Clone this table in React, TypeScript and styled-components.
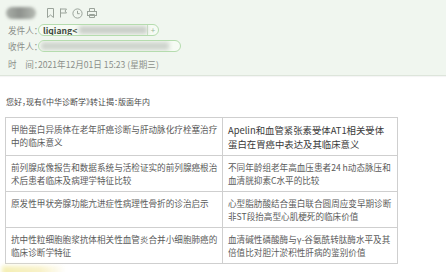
import React from 'react'
import styled, { createGlobalStyle } from 'styled-components'

const GlobalStyle = createGlobalStyle`
  html, body {
    margin: 0;
    padding: 0;
    background: #fff;
  }
  body {
    font-family: "Noto Sans CJK SC", "Noto Sans", sans-serif;
    width: 446px;
    height: 272px;
    overflow: hidden;
  }
`

const Page = styled.div`
  width: 446px;
  height: 272px;
  position: relative;
  overflow: hidden;
`

const Header = styled.div`
  background: #f0f6ef;
  height: 76px;
  box-sizing: border-box;
  padding: 6px 8px 0;
  border-bottom: 1px solid #dde5db;
  box-shadow: 0 1px 1px rgba(0, 0, 0, 0.04);
`

const TopBar = styled.div`
  display: flex;
  align-items: center;
  height: 14px;
  margin-left: -2px;
`

const BlurredName = styled.div`
  width: 30px;
  height: 12px;
  border-radius: 6px;
  background: linear-gradient(90deg, #a9aea8 0%, #8e928d 45%, #b5bab3 100%);
  filter: blur(1.5px);
  margin-right: 10px;
`

const Icons = styled.div`
  display: flex;
  align-items: center;
  gap: 4px;
  color: #9aa39a;

  svg {
    display: block;
  }
`

const FieldRow = styled.div<{ gap?: number }>`
  display: flex;
  align-items: center;
  height: 12px;
  margin-top: ${p => p.gap ?? 4}px;
  font-size: 8.6px;
  color: #8b8f8a;
  font-feature-settings: 'halt';
`

const Label = styled.span`
  width: 30px;
  flex-shrink: 0;
  white-space: nowrap;
`

const Pill = styled.div<{ w: number }>`
  display: flex;
  align-items: center;
  width: ${p => p.w}px;
  height: 12px;
  box-sizing: border-box;
  border: 1px solid #b5dcae;
  border-radius: 7px;
  background: #f6fbf4;
  overflow: hidden;
`

const PillName = styled.span`
  font-size: 8.6px;
  font-weight: 700;
  color: #3f4a3f;
  padding-left: 4px;
  white-space: nowrap;
`

const Smudge = styled.div<{ w: number; tone?: string }>`
  width: ${p => p.w}px;
  height: 8px;
  background: ${p => p.tone ?? '#c9cec8'};
  filter: blur(2px);
  margin-left: 2px;
`

const PlusBox = styled.div`
  margin-left: auto;
  width: 11px;
  height: 100%;
  border-left: 1px solid #c7dfc2;
  display: flex;
  align-items: center;
  justify-content: center;
  font-size: 8px;
  color: #9bb699;
  line-height: 1;
`

const TimeText = styled.span`
  white-space: nowrap;
`

const Body = styled.div`
  padding: 0 5px;
`

const Greeting = styled.p`
  margin: 20px 0 0 1px;
  height: 12px;
  line-height: 12px;
  font-size: 8px;
  color: #4a4a4a;
  font-feature-settings: 'halt';
  white-space: nowrap;
`

const Table = styled.table`
  margin-top: 9px;
  border-collapse: collapse;
  width: 392px;
  table-layout: fixed;
`

const Cell = styled.td<{ big?: boolean }>`
  border: 1px solid #cfcfcf;
  padding: 5px 5px 4px;
  vertical-align: top;
  font-size: ${p => (p.big ? 9.4 : 8.6)}px;
  line-height: ${p => (p.big ? 14 : 13)}px;
  color: ${p => (p.big ? '#3a3a3a' : '#5a5a5a')};
  white-space: nowrap;
  overflow: hidden;
`

const Signature = styled.div`
  position: absolute;
  left: 2px;
  top: 266px;
  width: 64px;
  height: 14px;
  background: linear-gradient(90deg, #f4efb4, #f8f1c8 60%, rgba(255, 255, 255, 0));
  filter: blur(2px);
`

const BookmarkIcon = () => (
  <svg width="9" height="10" viewBox="0 0 9 10" fill="none" stroke="currentColor" strokeWidth="1">
    <path d="M1.5 0.5h6v9l-3-2.5-3 2.5z" />
  </svg>
)

const FlagIcon = () => (
  <svg width="9" height="10" viewBox="0 0 9 10" fill="none" stroke="currentColor" strokeWidth="1">
    <path d="M1.5 0.5v9" />
    <path d="M1.5 1h6l-1.5 2 1.5 2h-6" />
  </svg>
)

const ClockIcon = () => (
  <svg width="11" height="11" viewBox="0 0 11 11" fill="none" stroke="currentColor" strokeWidth="1">
    <circle cx="5.5" cy="5.5" r="4.6" />
    <path d="M5.5 2.8v2.9h2.2" />
  </svg>
)

const PrintIcon = () => (
  <svg width="10" height="10" viewBox="0 0 10 10" fill="none" stroke="currentColor" strokeWidth="1">
    <path d="M2.5 3.5v-3h5v3" />
    <rect x="0.5" y="3.5" width="9" height="4" />
    <path d="M2.5 6.5h5v3h-5z" />
  </svg>
)

const rows: Array<[string[], string[], boolean?]> = [
  [
    ['甲胎蛋白异质体在老年肝癌诊断与肝动脉化疗栓塞治疗', '中的临床意义'],
    ['Apelin和血管紧张素受体AT1相关受体', '蛋白在胃癌中表达及其临床意义'],
    true,
  ],
  [
    ['前列腺成像报告和数据系统与活检证实的前列腺癌根治', '术后患者临床及病理学特征比较'],
    ['不同年龄组老年高血压患者24 h动态脉压和', '血清胱抑素C水平的比较'],
  ],
  [
    ['原发性甲状旁腺功能亢进症性病理性骨折的诊治启示'],
    ['心型脂肪酸结合蛋白联合圆周应变早期诊断', '非ST段抬高型心肌梗死的临床价值'],
  ],
  [
    ['抗中性粒细胞胞浆抗体相关性血管炎合并小细胞肺癌的', '临床诊断学特征'],
    ['血清碱性磷酸酶与γ-谷氨酰转肽酶水平及其', '倍值比对胆汁淤积性肝病的鉴别价值'],
  ],
]

const Lines = ({ lines }: { lines: string[] }) => (
  <>
    {lines.map((l, i) => (
      <div key={i}>{l}</div>
    ))}
  </>
)

const App = () => (
  <Page>
    <GlobalStyle />
    <Header>
      <TopBar>
        <BlurredName />
        <Icons>
          <BookmarkIcon />
          <FlagIcon />
          <ClockIcon />
          <PrintIcon />
        </Icons>
      </TopBar>
      <FieldRow gap={4}>
        <Label>发件人：</Label>
        <Pill w={121}>
          <PillName>liqiang&lt;</PillName>
          <Smudge w={72} />
          <PlusBox>+</PlusBox>
        </Pill>
      </FieldRow>
      <FieldRow gap={4}>
        <Label>收件人：</Label>
        <Pill w={143}>
          <Smudge w={128} tone="#cdd3cc" />
        </Pill>
      </FieldRow>
      <FieldRow gap={6}>
        <Label>时　间：</Label>
        <TimeText>2021年12月01日 15:23 (星期三)</TimeText>
      </FieldRow>
    </Header>
    <Body>
      <Greeting>您好，现有《中华诊断学》转让揭：版面年内</Greeting>
      <Table>
        <colgroup>
          <col style={{ width: 217 }} />
          <col style={{ width: 175 }} />
        </colgroup>
        <tbody>
          {rows.map(([left, right, big], i) => (
            <tr key={i}>
              <Cell>
                <Lines lines={left} />
              </Cell>
              <Cell big={big}>
                <Lines lines={right} />
              </Cell>
            </tr>
          ))}
        </tbody>
      </Table>
    </Body>
    <Signature />
  </Page>
)

export default App
